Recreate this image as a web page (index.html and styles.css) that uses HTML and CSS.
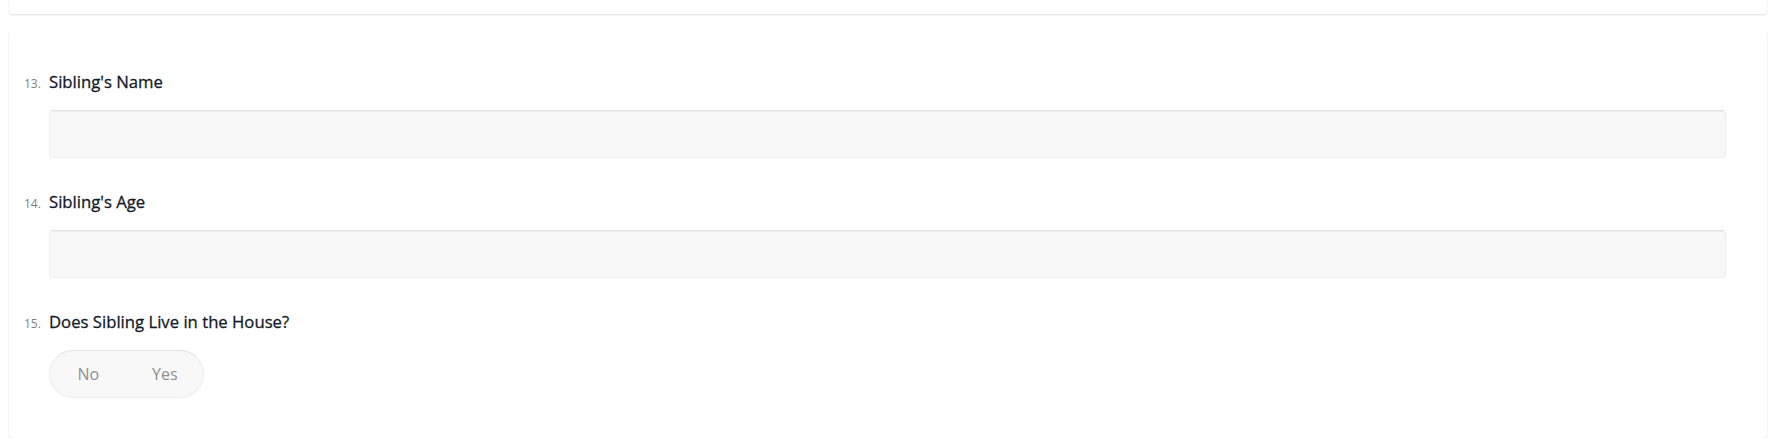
FILE: index.html
```html
<!DOCTYPE html>
<html lang="en">
<head>
<meta charset="utf-8">
<title>Form</title>
<link rel="stylesheet" href="styles.css">
</head>
<body>
<div class="page">
  <div class="card card-prev"></div>
  <div class="card card-main">
    <div class="question">
      <div class="q-label"><span class="q-num">13.</span><span class="q-text">Sibling's Name</span></div>
      <div class="q-field"><input class="text-input" type="text"></div>
    </div>
    <div class="question">
      <div class="q-label"><span class="q-num">14.</span><span class="q-text">Sibling's Age</span></div>
      <div class="q-field"><input class="text-input" type="text"></div>
    </div>
    <div class="question">
      <div class="q-label"><span class="q-num">15.</span><span class="q-text">Does Sibling Live in the House?</span></div>
      <div class="q-field">
        <div class="toggle">
          <span class="toggle-opt">No</span>
          <span class="toggle-opt">Yes</span>
        </div>
      </div>
    </div>
  </div>
</div>
</body>
</html>
```

FILE: styles.css
```css
* { box-sizing: border-box; }
html, body { margin: 0; padding: 0; background: #ffffff; }
body { font-family: "Open Sans", "Noto Sans", sans-serif; }
.page {
  display: flex;
  flex-direction: column;
  gap: 16px;
  padding: 0 10px 0 9px;
}
.card {
  background: #fff;
  border-radius: 4px;
  box-shadow: 0 1px 2px rgba(0,0,0,0.12), 0 0 1px rgba(0,0,0,0.06);
}
.card-prev {
  height: 14px;
  border-top-left-radius: 0;
  border-top-right-radius: 0;
}
.card-main {
  height: 408px;
  padding: 41px 41px 40px 15px;
  display: flex;
  flex-direction: column;
  gap: 33px;
}
.question {
  display: flex;
  flex-direction: column;
  gap: 17px;
}
.q-label {
  display: flex;
  align-items: baseline;
  height: 22px;
  line-height: 22px;
}
.q-num {
  width: 25px;
  font-size: 12px;
  line-height: 22px;
  color: #7f7f7f;
}
.q-text {
  font-size: 16.7px;
  line-height: 22px;
  font-weight: 400;
  color: #141a28;
  -webkit-text-stroke: 0.3px #141a28;
}
.q-field { padding-left: 25px; }
.text-input {
  display: block;
  width: 100%;
  height: 48px;
  border: 1px solid #efefef;
  border-top-color: #e3e3e3;
  border-radius: 4px;
  background: #f8f8f8;
  box-shadow: inset 0 1px 1px rgba(0,0,0,0.04);
  outline: none;
  margin: 0;
}
.toggle {
  display: flex;
  width: 155px;
  height: 48px;
  border: 1px solid #ececec;
  border-top-color: #e2e2e2;
  border-radius: 24px;
  background: #f8f8f8;
}
.toggle-opt {
  flex: 1;
  display: flex;
  align-items: center;
  justify-content: center;
  font-size: 16px;
  color: #8f8f8f;
}
```
